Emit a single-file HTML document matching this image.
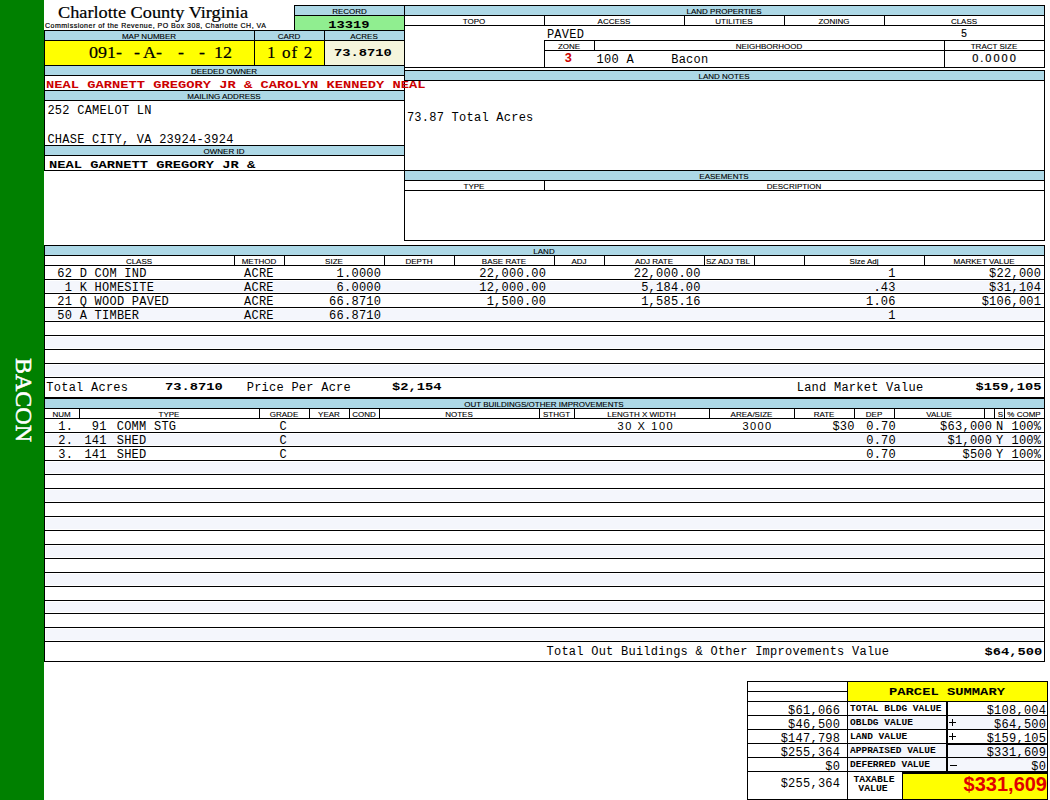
<!DOCTYPE html>
<html><head><meta charset="utf-8"><title>Charlotte County Virginia - Parcel</title>
<style>
html,body{margin:0;padding:0;background:#fff;}
body{width:1050px;height:800px;position:relative;overflow:hidden;}
body div{position:absolute;}
.t{white-space:pre;line-height:normal;}
</style></head><body>
<div style="left:0px;top:0px;width:44px;height:800px;background:#008000"></div>
<div style="left:294px;top:5px;width:110px;height:25px;background:#000"></div>
<div style="left:295px;top:6px;width:109px;height:9px;background:#add8e6"></div>
<div style="left:295px;top:16px;width:109px;height:14px;background:#90ee90"></div>
<div style="left:44px;top:30px;width:361px;height:141px;background:#000"></div>
<div style="left:45px;top:31px;width:209px;height:9px;background:#add8e6"></div>
<div style="left:255px;top:31px;width:69px;height:9px;background:#add8e6"></div>
<div style="left:325px;top:31px;width:79px;height:9px;background:#add8e6"></div>
<div style="left:45px;top:41px;width:209px;height:24px;background:#ffff00"></div>
<div style="left:255px;top:41px;width:69px;height:24px;background:#ffff00"></div>
<div style="left:325px;top:41px;width:79px;height:24px;background:#f5f5dc"></div>
<div style="left:45px;top:66px;width:359px;height:9px;background:#add8e6"></div>
<div style="left:45px;top:76px;width:359px;height:14px;background:#fff"></div>
<div style="left:45px;top:91px;width:359px;height:9px;background:#add8e6"></div>
<div style="left:45px;top:101px;width:359px;height:44px;background:#fff"></div>
<div style="left:45px;top:146px;width:359px;height:9px;background:#add8e6"></div>
<div style="left:45px;top:156px;width:359px;height:14px;background:#fff"></div>
<div style="left:404px;top:5px;width:641px;height:63px;background:#000"></div>
<div style="left:405px;top:6px;width:639px;height:9px;background:#add8e6"></div>
<div style="left:405px;top:16px;width:639px;height:9px;background:#fff"></div>
<div style="left:405px;top:26px;width:639px;height:41px;background:#fff"></div>
<div style="left:544px;top:15px;width:1px;height:11px;background:#000"></div>
<div style="left:684px;top:15px;width:1px;height:11px;background:#000"></div>
<div style="left:784px;top:15px;width:1px;height:11px;background:#000"></div>
<div style="left:884px;top:15px;width:1px;height:11px;background:#000"></div>
<div style="left:544px;top:40px;width:501px;height:1px;background:#000"></div>
<div style="left:544px;top:50px;width:501px;height:1px;background:#000"></div>
<div style="left:544px;top:40px;width:1px;height:28px;background:#000"></div>
<div style="left:594px;top:40px;width:1px;height:11px;background:#000"></div>
<div style="left:944px;top:40px;width:1px;height:28px;background:#000"></div>
<div style="left:404px;top:70px;width:641px;height:171px;background:#000"></div>
<div style="left:405px;top:71px;width:639px;height:9px;background:#add8e6"></div>
<div style="left:405px;top:81px;width:639px;height:89px;background:#fff"></div>
<div style="left:405px;top:171px;width:639px;height:9px;background:#add8e6"></div>
<div style="left:405px;top:181px;width:639px;height:9px;background:#fff"></div>
<div style="left:544px;top:180px;width:1px;height:11px;background:#000"></div>
<div style="left:405px;top:191px;width:639px;height:49px;background:#fff"></div>
<div style="left:44px;top:245px;width:1001px;height:154px;background:#000"></div>
<div style="left:45px;top:246px;width:999px;height:9px;background:#add8e6"></div>
<div style="left:45px;top:256px;width:999px;height:9px;background:#fff"></div>
<div style="left:234px;top:255px;width:1px;height:11px;background:#000"></div>
<div style="left:284px;top:255px;width:1px;height:11px;background:#000"></div>
<div style="left:384px;top:255px;width:1px;height:11px;background:#000"></div>
<div style="left:454px;top:255px;width:1px;height:11px;background:#000"></div>
<div style="left:554px;top:255px;width:1px;height:11px;background:#000"></div>
<div style="left:604px;top:255px;width:1px;height:11px;background:#000"></div>
<div style="left:704px;top:255px;width:1px;height:11px;background:#000"></div>
<div style="left:754px;top:255px;width:1px;height:11px;background:#000"></div>
<div style="left:804px;top:255px;width:1px;height:11px;background:#000"></div>
<div style="left:924px;top:255px;width:1px;height:11px;background:#000"></div>
<div style="left:45px;top:266px;width:999px;height:13px;background:#fff"></div>
<div style="left:45px;top:280px;width:999px;height:13px;background:#fff"></div>
<div style="left:46px;top:281px;width:997px;height:11px;background:#f4f6fc"></div>
<div style="left:45px;top:294px;width:999px;height:13px;background:#fff"></div>
<div style="left:45px;top:308px;width:999px;height:13px;background:#fff"></div>
<div style="left:46px;top:309px;width:997px;height:11px;background:#f4f6fc"></div>
<div style="left:45px;top:322px;width:999px;height:13px;background:#fff"></div>
<div style="left:45px;top:336px;width:999px;height:13px;background:#fff"></div>
<div style="left:46px;top:337px;width:997px;height:11px;background:#f4f6fc"></div>
<div style="left:45px;top:350px;width:999px;height:13px;background:#fff"></div>
<div style="left:45px;top:364px;width:999px;height:13px;background:#fff"></div>
<div style="left:46px;top:365px;width:997px;height:11px;background:#f4f6fc"></div>
<div style="left:45px;top:378px;width:999px;height:19px;background:#fff"></div>
<div style="left:44px;top:398px;width:1001px;height:1px;background:#000"></div>
<div style="left:44px;top:398px;width:1001px;height:264px;background:#000"></div>
<div style="left:45px;top:399px;width:999px;height:9px;background:#add8e6"></div>
<div style="left:45px;top:409px;width:999px;height:9px;background:#fff"></div>
<div style="left:79px;top:408px;width:1px;height:11px;background:#000"></div>
<div style="left:259px;top:408px;width:1px;height:11px;background:#000"></div>
<div style="left:309px;top:408px;width:1px;height:11px;background:#000"></div>
<div style="left:349px;top:408px;width:1px;height:11px;background:#000"></div>
<div style="left:379px;top:408px;width:1px;height:11px;background:#000"></div>
<div style="left:539px;top:408px;width:1px;height:11px;background:#000"></div>
<div style="left:574px;top:408px;width:1px;height:11px;background:#000"></div>
<div style="left:709px;top:408px;width:1px;height:11px;background:#000"></div>
<div style="left:794px;top:408px;width:1px;height:11px;background:#000"></div>
<div style="left:854px;top:408px;width:1px;height:11px;background:#000"></div>
<div style="left:894px;top:408px;width:1px;height:11px;background:#000"></div>
<div style="left:984px;top:408px;width:1px;height:11px;background:#000"></div>
<div style="left:994px;top:408px;width:1px;height:11px;background:#000"></div>
<div style="left:1004px;top:408px;width:1px;height:11px;background:#000"></div>
<div style="left:45px;top:419px;width:999px;height:13px;background:#fff"></div>
<div style="left:45px;top:433px;width:999px;height:13px;background:#fff"></div>
<div style="left:46px;top:434px;width:997px;height:11px;background:#f4f6fc"></div>
<div style="left:45px;top:447px;width:999px;height:13px;background:#fff"></div>
<div style="left:45px;top:461px;width:999px;height:13px;background:#fff"></div>
<div style="left:46px;top:462px;width:997px;height:11px;background:#f4f6fc"></div>
<div style="left:45px;top:475px;width:999px;height:13px;background:#fff"></div>
<div style="left:45px;top:489px;width:999px;height:13px;background:#fff"></div>
<div style="left:46px;top:490px;width:997px;height:11px;background:#f4f6fc"></div>
<div style="left:45px;top:503px;width:999px;height:13px;background:#fff"></div>
<div style="left:45px;top:517px;width:999px;height:13px;background:#fff"></div>
<div style="left:46px;top:518px;width:997px;height:11px;background:#f4f6fc"></div>
<div style="left:45px;top:531px;width:999px;height:13px;background:#fff"></div>
<div style="left:45px;top:545px;width:999px;height:13px;background:#fff"></div>
<div style="left:46px;top:546px;width:997px;height:11px;background:#f4f6fc"></div>
<div style="left:45px;top:559px;width:999px;height:13px;background:#fff"></div>
<div style="left:45px;top:573px;width:999px;height:13px;background:#fff"></div>
<div style="left:46px;top:574px;width:997px;height:11px;background:#f4f6fc"></div>
<div style="left:45px;top:587px;width:999px;height:13px;background:#fff"></div>
<div style="left:45px;top:601px;width:999px;height:12px;background:#fff"></div>
<div style="left:46px;top:602px;width:997px;height:10px;background:#f4f6fc"></div>
<div style="left:45px;top:614px;width:999px;height:13px;background:#fff"></div>
<div style="left:45px;top:628px;width:999px;height:13px;background:#fff"></div>
<div style="left:46px;top:629px;width:997px;height:11px;background:#f4f6fc"></div>
<div style="left:45px;top:642px;width:999px;height:19px;background:#fff"></div>
<div style="left:747px;top:681px;width:301px;height:119px;background:#000"></div>
<div style="left:748px;top:682px;width:99px;height:9px;background:#fff"></div>
<div style="left:748px;top:692px;width:99px;height:9px;background:#fff"></div>
<div style="left:748px;top:702px;width:99px;height:13px;background:#fff"></div>
<div style="left:748px;top:716px;width:99px;height:13px;background:#fff"></div>
<div style="left:748px;top:730px;width:99px;height:13px;background:#fff"></div>
<div style="left:748px;top:744px;width:99px;height:13px;background:#fff"></div>
<div style="left:748px;top:758px;width:99px;height:13px;background:#fff"></div>
<div style="left:748px;top:772px;width:99px;height:27px;background:#fff"></div>
<div style="left:848px;top:682px;width:199px;height:19px;background:#ffff00"></div>
<div style="left:848px;top:702px;width:99px;height:13px;background:#fff"></div>
<div style="left:948px;top:702px;width:99px;height:13px;background:#fff"></div>
<div style="left:848px;top:716px;width:99px;height:13px;background:#f4f6fc"></div>
<div style="left:948px;top:716px;width:99px;height:13px;background:#f4f6fc"></div>
<div style="left:848px;top:730px;width:99px;height:13px;background:#fff"></div>
<div style="left:948px;top:730px;width:99px;height:13px;background:#fff"></div>
<div style="left:848px;top:744px;width:99px;height:13px;background:#f4f6fc"></div>
<div style="left:948px;top:744px;width:99px;height:13px;background:#f4f6fc"></div>
<div style="left:848px;top:758px;width:99px;height:13px;background:#f4f6fc"></div>
<div style="left:948px;top:758px;width:99px;height:13px;background:#f4f6fc"></div>
<div style="left:948px;top:743px;width:99px;height:2px;background:#000"></div>
<div style="left:946px;top:701px;width:2px;height:71px;background:#000"></div>
<div style="left:848px;top:772px;width:54px;height:27px;background:#fff"></div>
<div style="left:902px;top:771px;width:146px;height:29px;background:#000"></div>
<div style="left:903px;top:774px;width:144px;height:25px;background:#ffff00"></div>
<div style="left:949px;top:722px;width:7px;height:1px;background:#000"></div>
<div style="left:952px;top:719px;width:1px;height:7px;background:#000"></div>
<div style="left:949px;top:736px;width:7px;height:1px;background:#000"></div>
<div style="left:952px;top:733px;width:1px;height:7px;background:#000"></div>
<div style="left:950px;top:765px;width:7px;height:1px;background:#000"></div>
<div style="left:23.5px;top:399.5px;width:0;height:0"><div style="position:absolute;left:-60px;top:-14px;width:120px;text-align:center;transform:rotate(90deg);font:24px 'Liberation Serif', serif;color:#fff;-webkit-text-stroke:0.5px #fff;line-height:28px;white-space:pre">BACON</div></div>
<div class="t" style="top:2.80px;font:normal 17px 'Liberation Serif', serif;color:#000;left:58.00px;transform:scaleX(1.075);transform-origin:left 0;-webkit-text-stroke:0.2px #000;">Charlotte County Virginia</div>
<div class="t" style="top:21.50px;font:normal 7px 'Liberation Sans', sans-serif;color:#000;letter-spacing:0.5px;left:45.00px;-webkit-text-stroke:0.2px #000;">Commissioner of the Revenue, PO Box 308, Charlotte CH, VA</div>
<div class="t" style="top:6.70px;font:normal 8px 'Liberation Sans', sans-serif;color:#000;left:-50.50px;width:800px;text-align:center;-webkit-text-stroke:0.12px #000;">RECORD</div>
<div class="t" style="top:17.80px;font:bold 11.75px 'Liberation Mono', monospace;color:#000;left:-51.00px;width:800px;text-align:center;transform:scaleX(1.17);transform-origin:center 0;">13319</div>
<div class="t" style="top:31.70px;font:normal 8px 'Liberation Sans', sans-serif;color:#000;left:-251.00px;width:800px;text-align:center;-webkit-text-stroke:0.12px #000;">MAP NUMBER</div>
<div class="t" style="top:31.70px;font:normal 8px 'Liberation Sans', sans-serif;color:#000;left:-111.00px;width:800px;text-align:center;-webkit-text-stroke:0.12px #000;">CARD</div>
<div class="t" style="top:31.70px;font:normal 8px 'Liberation Sans', sans-serif;color:#000;left:-36.00px;width:800px;text-align:center;-webkit-text-stroke:0.12px #000;">ACRES</div>
<div class="t" style="top:42.70px;font:normal 17px 'Liberation Serif', serif;color:#000;left:88.80px;transform:scaleX(1.06);transform-origin:left 0;-webkit-text-stroke:0.2px #000;">091-</div>
<div class="t" style="top:42.70px;font:normal 17px 'Liberation Serif', serif;color:#000;left:134.00px;transform:scaleX(1.06);transform-origin:left 0;-webkit-text-stroke:0.2px #000;">-</div>
<div class="t" style="top:42.70px;font:normal 17px 'Liberation Serif', serif;color:#000;left:143.20px;transform:scaleX(1.06);transform-origin:left 0;-webkit-text-stroke:0.2px #000;">A-</div>
<div class="t" style="top:42.70px;font:normal 17px 'Liberation Serif', serif;color:#000;left:177.50px;transform:scaleX(1.06);transform-origin:left 0;-webkit-text-stroke:0.2px #000;">-</div>
<div class="t" style="top:42.70px;font:normal 17px 'Liberation Serif', serif;color:#000;left:198.90px;transform:scaleX(1.06);transform-origin:left 0;-webkit-text-stroke:0.2px #000;">-</div>
<div class="t" style="top:42.70px;font:normal 17px 'Liberation Serif', serif;color:#000;left:214.10px;transform:scaleX(1.06);transform-origin:left 0;-webkit-text-stroke:0.2px #000;">12</div>
<div class="t" style="top:42.80px;font:normal 17px 'Liberation Serif', serif;color:#000;letter-spacing:1.1px;left:267.00px;-webkit-text-stroke:0.2px #000;">1 of 2</div>
<div class="t" style="top:45.80px;font:bold 11.75px 'Liberation Mono', monospace;color:#000;left:-37.00px;width:800px;text-align:center;transform:scaleX(1.17);transform-origin:center 0;">73.8710</div>
<div class="t" style="top:66.70px;font:normal 8px 'Liberation Sans', sans-serif;color:#000;left:-176.00px;width:800px;text-align:center;-webkit-text-stroke:0.12px #000;">DEEDED OWNER</div>
<div class="t" style="top:91.70px;font:normal 8px 'Liberation Sans', sans-serif;color:#000;left:-176.00px;width:800px;text-align:center;-webkit-text-stroke:0.12px #000;">MAILING ADDRESS</div>
<div class="t" style="top:103.70px;font:normal 12px 'Liberation Mono', monospace;color:#000;letter-spacing:0.25px;left:47.40px;">252 CAMELOT LN</div>
<div class="t" style="top:133.40px;font:normal 12px 'Liberation Mono', monospace;color:#000;letter-spacing:0.25px;left:47.40px;">CHASE CITY, VA 23924-3924</div>
<div class="t" style="top:146.70px;font:normal 8px 'Liberation Sans', sans-serif;color:#000;left:-176.00px;width:800px;text-align:center;-webkit-text-stroke:0.12px #000;">OWNER ID</div>
<div class="t" style="top:157.70px;font:bold 11.75px 'Liberation Mono', monospace;color:#000;left:49.00px;transform:scaleX(1.17);transform-origin:left 0;">NEAL GARNETT GREGORY JR &</div>
<div class="t" style="top:6.70px;font:normal 8px 'Liberation Sans', sans-serif;color:#000;left:324.00px;width:800px;text-align:center;-webkit-text-stroke:0.12px #000;">LAND PROPERTIES</div>
<div class="t" style="top:16.70px;font:normal 8px 'Liberation Sans', sans-serif;color:#000;left:74.00px;width:800px;text-align:center;-webkit-text-stroke:0.12px #000;">TOPO</div>
<div class="t" style="top:16.70px;font:normal 8px 'Liberation Sans', sans-serif;color:#000;left:214.00px;width:800px;text-align:center;-webkit-text-stroke:0.12px #000;">ACCESS</div>
<div class="t" style="top:16.70px;font:normal 8px 'Liberation Sans', sans-serif;color:#000;left:334.00px;width:800px;text-align:center;-webkit-text-stroke:0.12px #000;">UTILITIES</div>
<div class="t" style="top:16.70px;font:normal 8px 'Liberation Sans', sans-serif;color:#000;left:434.00px;width:800px;text-align:center;-webkit-text-stroke:0.12px #000;">ZONING</div>
<div class="t" style="top:16.70px;font:normal 8px 'Liberation Sans', sans-serif;color:#000;left:564.00px;width:800px;text-align:center;-webkit-text-stroke:0.12px #000;">CLASS</div>
<div class="t" style="top:41.70px;font:normal 8px 'Liberation Sans', sans-serif;color:#000;left:169.00px;width:800px;text-align:center;-webkit-text-stroke:0.12px #000;">ZONE</div>
<div class="t" style="top:41.70px;font:normal 8px 'Liberation Sans', sans-serif;color:#000;left:369.00px;width:800px;text-align:center;-webkit-text-stroke:0.12px #000;">NEIGHBORHOOD</div>
<div class="t" style="top:41.70px;font:normal 8px 'Liberation Sans', sans-serif;color:#000;left:594.00px;width:800px;text-align:center;-webkit-text-stroke:0.12px #000;">TRACT SIZE</div>
<div class="t" style="top:28.00px;font:normal 12px 'Liberation Mono', monospace;color:#000;letter-spacing:0.25px;left:546.90px;">PAVED</div>
<div class="t" style="top:27.60px;font:normal 10px 'Liberation Sans', sans-serif;color:#000;left:564.00px;width:800px;text-align:center;-webkit-text-stroke:0.2px #000;">5</div>
<div class="t" style="top:51.90px;font:bold 12.5px 'Liberation Mono', monospace;color:#cc0000;left:168.30px;width:800px;text-align:center;">3</div>
<div class="t" style="top:52.50px;font:normal 12px 'Liberation Mono', monospace;color:#000;letter-spacing:0.25px;left:596.60px;">100 A</div>
<div class="t" style="top:52.50px;font:normal 12px 'Liberation Mono', monospace;color:#000;letter-spacing:0.25px;left:671.20px;">Bacon</div>
<div class="t" style="top:51.60px;font:normal 11px 'Liberation Sans', sans-serif;color:#000;letter-spacing:2.0px;left:595.00px;width:800px;text-align:center;-webkit-text-stroke:0.2px #000;">0.0000</div>
<div class="t" style="top:71.70px;font:normal 8px 'Liberation Sans', sans-serif;color:#000;left:324.00px;width:800px;text-align:center;-webkit-text-stroke:0.12px #000;">LAND NOTES</div>
<div class="t" style="top:110.60px;font:normal 12px 'Liberation Mono', monospace;color:#000;letter-spacing:0.25px;left:406.90px;">73.87 Total Acres</div>
<div class="t" style="top:171.70px;font:normal 8px 'Liberation Sans', sans-serif;color:#000;left:324.00px;width:800px;text-align:center;-webkit-text-stroke:0.12px #000;">EASEMENTS</div>
<div class="t" style="top:181.70px;font:normal 8px 'Liberation Sans', sans-serif;color:#000;left:74.00px;width:800px;text-align:center;-webkit-text-stroke:0.12px #000;">TYPE</div>
<div class="t" style="top:181.70px;font:normal 8px 'Liberation Sans', sans-serif;color:#000;left:394.00px;width:800px;text-align:center;-webkit-text-stroke:0.12px #000;">DESCRIPTION</div>
<div class="t" style="top:77.60px;font:bold 11.75px 'Liberation Mono', monospace;color:#cc0000;left:46.00px;transform:scaleX(1.17);transform-origin:left 0;">NEAL GARNETT GREGORY JR &amp; CAROLYN KENNEDY NEAL</div>
<div class="t" style="top:246.90px;font:normal 8px 'Liberation Sans', sans-serif;color:#000;left:144.00px;width:800px;text-align:center;-webkit-text-stroke:0.12px #000;">LAND</div>
<div class="t" style="top:256.50px;font:normal 8px 'Liberation Sans', sans-serif;color:#000;left:-261.00px;width:800px;text-align:center;-webkit-text-stroke:0.12px #000;">CLASS</div>
<div class="t" style="top:256.50px;font:normal 8px 'Liberation Sans', sans-serif;color:#000;left:-141.00px;width:800px;text-align:center;-webkit-text-stroke:0.12px #000;">METHOD</div>
<div class="t" style="top:256.50px;font:normal 8px 'Liberation Sans', sans-serif;color:#000;left:-66.00px;width:800px;text-align:center;-webkit-text-stroke:0.12px #000;">SIZE</div>
<div class="t" style="top:256.50px;font:normal 8px 'Liberation Sans', sans-serif;color:#000;left:19.00px;width:800px;text-align:center;-webkit-text-stroke:0.12px #000;">DEPTH</div>
<div class="t" style="top:256.50px;font:normal 8px 'Liberation Sans', sans-serif;color:#000;left:104.00px;width:800px;text-align:center;-webkit-text-stroke:0.12px #000;">BASE RATE</div>
<div class="t" style="top:256.50px;font:normal 8px 'Liberation Sans', sans-serif;color:#000;left:179.00px;width:800px;text-align:center;-webkit-text-stroke:0.12px #000;">ADJ</div>
<div class="t" style="top:256.50px;font:normal 8px 'Liberation Sans', sans-serif;color:#000;left:254.00px;width:800px;text-align:center;-webkit-text-stroke:0.12px #000;">ADJ RATE</div>
<div class="t" style="top:256.50px;font:normal 8px 'Liberation Sans', sans-serif;color:#000;left:464.00px;width:800px;text-align:center;-webkit-text-stroke:0.12px #000;">Size Adj</div>
<div class="t" style="top:256.50px;font:normal 8px 'Liberation Sans', sans-serif;color:#000;left:584.00px;width:800px;text-align:center;-webkit-text-stroke:0.12px #000;">MARKET VALUE</div>
<div class="t" style="top:256.50px;font:normal 8px 'Liberation Sans', sans-serif;color:#000;left:706.00px;-webkit-text-stroke:0.12px #000;">SZ ADJ TBL</div>
<div class="t" style="top:267.20px;font:normal 12px 'Liberation Mono', monospace;color:#000;letter-spacing:0.25px;left:57.30px;">62 D COM IND</div>
<div class="t" style="top:267.20px;font:normal 12px 'Liberation Mono', monospace;color:#000;letter-spacing:0.25px;left:244.00px;">ACRE</div>
<div class="t" style="top:267.20px;font:normal 12px 'Liberation Mono', monospace;color:#000;letter-spacing:0.25px;right:668.75px;">1.0000</div>
<div class="t" style="top:267.20px;font:normal 12px 'Liberation Mono', monospace;color:#000;letter-spacing:0.25px;right:503.75px;">22,000.00</div>
<div class="t" style="top:267.20px;font:normal 12px 'Liberation Mono', monospace;color:#000;letter-spacing:0.25px;right:349.25px;">22,000.00</div>
<div class="t" style="top:267.20px;font:normal 12px 'Liberation Mono', monospace;color:#000;letter-spacing:0.25px;right:154.25px;">1</div>
<div class="t" style="top:267.20px;font:normal 12px 'Liberation Mono', monospace;color:#000;letter-spacing:0.25px;right:8.75px;">$22,000</div>
<div class="t" style="top:281.20px;font:normal 12px 'Liberation Mono', monospace;color:#000;letter-spacing:0.25px;left:57.30px;"> 1 K HOMESITE</div>
<div class="t" style="top:281.20px;font:normal 12px 'Liberation Mono', monospace;color:#000;letter-spacing:0.25px;left:244.00px;">ACRE</div>
<div class="t" style="top:281.20px;font:normal 12px 'Liberation Mono', monospace;color:#000;letter-spacing:0.25px;right:668.75px;">6.0000</div>
<div class="t" style="top:281.20px;font:normal 12px 'Liberation Mono', monospace;color:#000;letter-spacing:0.25px;right:503.75px;">12,000.00</div>
<div class="t" style="top:281.20px;font:normal 12px 'Liberation Mono', monospace;color:#000;letter-spacing:0.25px;right:349.25px;">5,184.00</div>
<div class="t" style="top:281.20px;font:normal 12px 'Liberation Mono', monospace;color:#000;letter-spacing:0.25px;right:154.25px;">.43</div>
<div class="t" style="top:281.20px;font:normal 12px 'Liberation Mono', monospace;color:#000;letter-spacing:0.25px;right:8.75px;">$31,104</div>
<div class="t" style="top:295.20px;font:normal 12px 'Liberation Mono', monospace;color:#000;letter-spacing:0.25px;left:57.30px;">21 Q WOOD PAVED</div>
<div class="t" style="top:295.20px;font:normal 12px 'Liberation Mono', monospace;color:#000;letter-spacing:0.25px;left:244.00px;">ACRE</div>
<div class="t" style="top:295.20px;font:normal 12px 'Liberation Mono', monospace;color:#000;letter-spacing:0.25px;right:668.75px;">66.8710</div>
<div class="t" style="top:295.20px;font:normal 12px 'Liberation Mono', monospace;color:#000;letter-spacing:0.25px;right:503.75px;">1,500.00</div>
<div class="t" style="top:295.20px;font:normal 12px 'Liberation Mono', monospace;color:#000;letter-spacing:0.25px;right:349.25px;">1,585.16</div>
<div class="t" style="top:295.20px;font:normal 12px 'Liberation Mono', monospace;color:#000;letter-spacing:0.25px;right:154.25px;">1.06</div>
<div class="t" style="top:295.20px;font:normal 12px 'Liberation Mono', monospace;color:#000;letter-spacing:0.25px;right:8.75px;">$106,001</div>
<div class="t" style="top:309.20px;font:normal 12px 'Liberation Mono', monospace;color:#000;letter-spacing:0.25px;left:57.30px;">50 A TIMBER</div>
<div class="t" style="top:309.20px;font:normal 12px 'Liberation Mono', monospace;color:#000;letter-spacing:0.25px;left:244.00px;">ACRE</div>
<div class="t" style="top:309.20px;font:normal 12px 'Liberation Mono', monospace;color:#000;letter-spacing:0.25px;right:668.75px;">66.8710</div>
<div class="t" style="top:309.20px;font:normal 12px 'Liberation Mono', monospace;color:#000;letter-spacing:0.25px;right:154.25px;">1</div>
<div class="t" style="top:380.50px;font:normal 12px 'Liberation Mono', monospace;color:#000;letter-spacing:0.25px;left:46.30px;">Total Acres</div>
<div class="t" style="top:379.70px;font:bold 11.75px 'Liberation Mono', monospace;color:#000;left:165.30px;transform:scaleX(1.17);transform-origin:left 0;">73.8710</div>
<div class="t" style="top:380.50px;font:normal 12px 'Liberation Mono', monospace;color:#000;letter-spacing:0.25px;left:246.70px;">Price Per Acre</div>
<div class="t" style="top:379.70px;font:bold 11.75px 'Liberation Mono', monospace;color:#000;left:392.40px;transform:scaleX(1.17);transform-origin:left 0;">$2,154</div>
<div class="t" style="top:380.50px;font:normal 12px 'Liberation Mono', monospace;color:#000;letter-spacing:0.25px;left:796.70px;">Land Market Value</div>
<div class="t" style="top:379.70px;font:bold 11.75px 'Liberation Mono', monospace;color:#000;right:9.00px;transform:scaleX(1.17);transform-origin:right 0;">$159,105</div>
<div class="t" style="top:399.70px;font:normal 8px 'Liberation Sans', sans-serif;color:#000;left:144.00px;width:800px;text-align:center;-webkit-text-stroke:0.12px #000;">OUT BUILDINGS/OTHER IMPROVEMENTS</div>
<div class="t" style="top:409.70px;font:normal 8px 'Liberation Sans', sans-serif;color:#000;left:-338.50px;width:800px;text-align:center;-webkit-text-stroke:0.12px #000;">NUM</div>
<div class="t" style="top:409.70px;font:normal 8px 'Liberation Sans', sans-serif;color:#000;left:-231.00px;width:800px;text-align:center;-webkit-text-stroke:0.12px #000;">TYPE</div>
<div class="t" style="top:409.70px;font:normal 8px 'Liberation Sans', sans-serif;color:#000;left:-116.00px;width:800px;text-align:center;-webkit-text-stroke:0.12px #000;">GRADE</div>
<div class="t" style="top:409.70px;font:normal 8px 'Liberation Sans', sans-serif;color:#000;left:-71.00px;width:800px;text-align:center;-webkit-text-stroke:0.12px #000;">YEAR</div>
<div class="t" style="top:409.70px;font:normal 8px 'Liberation Sans', sans-serif;color:#000;left:-36.00px;width:800px;text-align:center;-webkit-text-stroke:0.12px #000;">COND</div>
<div class="t" style="top:409.70px;font:normal 8px 'Liberation Sans', sans-serif;color:#000;left:59.00px;width:800px;text-align:center;-webkit-text-stroke:0.12px #000;">NOTES</div>
<div class="t" style="top:409.70px;font:normal 8px 'Liberation Sans', sans-serif;color:#000;left:156.50px;width:800px;text-align:center;-webkit-text-stroke:0.12px #000;">STHGT</div>
<div class="t" style="top:409.70px;font:normal 8px 'Liberation Sans', sans-serif;color:#000;left:241.50px;width:800px;text-align:center;-webkit-text-stroke:0.12px #000;">LENGTH X WIDTH</div>
<div class="t" style="top:409.70px;font:normal 8px 'Liberation Sans', sans-serif;color:#000;left:351.50px;width:800px;text-align:center;-webkit-text-stroke:0.12px #000;">AREA/SIZE</div>
<div class="t" style="top:409.70px;font:normal 8px 'Liberation Sans', sans-serif;color:#000;left:424.00px;width:800px;text-align:center;-webkit-text-stroke:0.12px #000;">RATE</div>
<div class="t" style="top:409.70px;font:normal 8px 'Liberation Sans', sans-serif;color:#000;left:474.00px;width:800px;text-align:center;-webkit-text-stroke:0.12px #000;">DEP</div>
<div class="t" style="top:409.70px;font:normal 8px 'Liberation Sans', sans-serif;color:#000;left:539.00px;width:800px;text-align:center;-webkit-text-stroke:0.12px #000;">VALUE</div>
<div class="t" style="top:409.70px;font:normal 8px 'Liberation Sans', sans-serif;color:#000;left:624.00px;width:800px;text-align:center;-webkit-text-stroke:0.12px #000;">% COMP</div>
<div class="t" style="top:409.70px;font:normal 8px 'Liberation Sans', sans-serif;color:#000;right:47.00px;-webkit-text-stroke:0.12px #000;">S</div>
<div class="t" style="top:420.20px;font:normal 12px 'Liberation Mono', monospace;color:#000;letter-spacing:0.25px;left:58.20px;">1.</div>
<div class="t" style="top:420.20px;font:normal 12px 'Liberation Mono', monospace;color:#000;letter-spacing:0.25px;right:943.25px;">91</div>
<div class="t" style="top:420.20px;font:normal 12px 'Liberation Mono', monospace;color:#000;letter-spacing:0.25px;left:116.70px;">COMM STG</div>
<div class="t" style="top:420.20px;font:normal 12px 'Liberation Mono', monospace;color:#000;letter-spacing:0.25px;left:-116.88px;width:800px;text-align:center;">C</div>
<div class="t" style="top:420.00px;font:normal 11px 'Liberation Sans', sans-serif;color:#000;letter-spacing:1.6px;left:617.50px;">30 X 100</div>
<div class="t" style="top:420.00px;font:normal 11px 'Liberation Sans', sans-serif;color:#000;letter-spacing:1.4px;left:742.50px;">3000</div>
<div class="t" style="top:420.20px;font:normal 12px 'Liberation Mono', monospace;color:#000;letter-spacing:0.25px;right:195.25px;">$30</div>
<div class="t" style="top:420.20px;font:normal 12px 'Liberation Mono', monospace;color:#000;letter-spacing:0.25px;left:866.20px;">0.70</div>
<div class="t" style="top:420.20px;font:normal 12px 'Liberation Mono', monospace;color:#000;letter-spacing:0.25px;right:57.75px;">$63,000</div>
<div class="t" style="top:420.20px;font:normal 12px 'Liberation Mono', monospace;color:#000;letter-spacing:0.25px;left:599.62px;width:800px;text-align:center;">N</div>
<div class="t" style="top:420.20px;font:normal 12px 'Liberation Mono', monospace;color:#000;letter-spacing:0.25px;right:8.75px;">100%</div>
<div class="t" style="top:434.20px;font:normal 12px 'Liberation Mono', monospace;color:#000;letter-spacing:0.25px;left:58.20px;">2.</div>
<div class="t" style="top:434.20px;font:normal 12px 'Liberation Mono', monospace;color:#000;letter-spacing:0.25px;right:943.25px;">141</div>
<div class="t" style="top:434.20px;font:normal 12px 'Liberation Mono', monospace;color:#000;letter-spacing:0.25px;left:116.70px;">SHED</div>
<div class="t" style="top:434.20px;font:normal 12px 'Liberation Mono', monospace;color:#000;letter-spacing:0.25px;left:-116.88px;width:800px;text-align:center;">C</div>
<div class="t" style="top:434.20px;font:normal 12px 'Liberation Mono', monospace;color:#000;letter-spacing:0.25px;left:866.20px;">0.70</div>
<div class="t" style="top:434.20px;font:normal 12px 'Liberation Mono', monospace;color:#000;letter-spacing:0.25px;right:57.75px;">$1,000</div>
<div class="t" style="top:434.20px;font:normal 12px 'Liberation Mono', monospace;color:#000;letter-spacing:0.25px;left:599.62px;width:800px;text-align:center;">Y</div>
<div class="t" style="top:434.20px;font:normal 12px 'Liberation Mono', monospace;color:#000;letter-spacing:0.25px;right:8.75px;">100%</div>
<div class="t" style="top:448.20px;font:normal 12px 'Liberation Mono', monospace;color:#000;letter-spacing:0.25px;left:58.20px;">3.</div>
<div class="t" style="top:448.20px;font:normal 12px 'Liberation Mono', monospace;color:#000;letter-spacing:0.25px;right:943.25px;">141</div>
<div class="t" style="top:448.20px;font:normal 12px 'Liberation Mono', monospace;color:#000;letter-spacing:0.25px;left:116.70px;">SHED</div>
<div class="t" style="top:448.20px;font:normal 12px 'Liberation Mono', monospace;color:#000;letter-spacing:0.25px;left:-116.88px;width:800px;text-align:center;">C</div>
<div class="t" style="top:448.20px;font:normal 12px 'Liberation Mono', monospace;color:#000;letter-spacing:0.25px;left:866.20px;">0.70</div>
<div class="t" style="top:448.20px;font:normal 12px 'Liberation Mono', monospace;color:#000;letter-spacing:0.25px;right:57.75px;">$500</div>
<div class="t" style="top:448.20px;font:normal 12px 'Liberation Mono', monospace;color:#000;letter-spacing:0.25px;left:599.62px;width:800px;text-align:center;">Y</div>
<div class="t" style="top:448.20px;font:normal 12px 'Liberation Mono', monospace;color:#000;letter-spacing:0.25px;right:8.75px;">100%</div>
<div class="t" style="top:645.40px;font:normal 12px 'Liberation Mono', monospace;color:#000;letter-spacing:0.25px;left:546.50px;">Total Out Buildings &amp; Other Improvements Value</div>
<div class="t" style="top:644.60px;font:bold 11.75px 'Liberation Mono', monospace;color:#000;right:8.00px;transform:scaleX(1.17);transform-origin:right 0;">$64,500</div>
<div class="t" style="top:703.60px;font:normal 12px 'Liberation Mono', monospace;color:#000;letter-spacing:0.25px;right:209.75px;">$61,066</div>
<div class="t" style="top:704.30px;font:bold 8.5px 'Liberation Mono', monospace;color:#000;left:849.50px;transform:scaleX(1.12);transform-origin:left 0;">TOTAL BLDG VALUE</div>
<div class="t" style="top:703.60px;font:normal 12px 'Liberation Mono', monospace;color:#000;letter-spacing:0.25px;right:3.75px;">$108,004</div>
<div class="t" style="top:717.60px;font:normal 12px 'Liberation Mono', monospace;color:#000;letter-spacing:0.25px;right:209.75px;">$46,500</div>
<div class="t" style="top:718.30px;font:bold 8.5px 'Liberation Mono', monospace;color:#000;left:849.50px;transform:scaleX(1.12);transform-origin:left 0;">OBLDG VALUE</div>
<div class="t" style="top:717.60px;font:normal 12px 'Liberation Mono', monospace;color:#000;letter-spacing:0.25px;right:3.75px;">$64,500</div>
<div class="t" style="top:731.60px;font:normal 12px 'Liberation Mono', monospace;color:#000;letter-spacing:0.25px;right:209.75px;">$147,798</div>
<div class="t" style="top:732.30px;font:bold 8.5px 'Liberation Mono', monospace;color:#000;left:849.50px;transform:scaleX(1.12);transform-origin:left 0;">LAND VALUE</div>
<div class="t" style="top:731.60px;font:normal 12px 'Liberation Mono', monospace;color:#000;letter-spacing:0.25px;right:3.75px;">$159,105</div>
<div class="t" style="top:745.60px;font:normal 12px 'Liberation Mono', monospace;color:#000;letter-spacing:0.25px;right:209.75px;">$255,364</div>
<div class="t" style="top:746.30px;font:bold 8.5px 'Liberation Mono', monospace;color:#000;left:849.50px;transform:scaleX(1.12);transform-origin:left 0;">APPRAISED VALUE</div>
<div class="t" style="top:745.60px;font:normal 12px 'Liberation Mono', monospace;color:#000;letter-spacing:0.25px;right:3.75px;">$331,609</div>
<div class="t" style="top:759.60px;font:normal 12px 'Liberation Mono', monospace;color:#000;letter-spacing:0.25px;right:209.75px;">$0</div>
<div class="t" style="top:760.30px;font:bold 8.5px 'Liberation Mono', monospace;color:#000;left:849.50px;transform:scaleX(1.12);transform-origin:left 0;">DEFERRED VALUE</div>
<div class="t" style="top:759.60px;font:normal 12px 'Liberation Mono', monospace;color:#000;letter-spacing:0.25px;right:3.75px;">$0</div>
<div class="t" style="top:776.80px;font:normal 12px 'Liberation Mono', monospace;color:#000;letter-spacing:0.25px;right:209.75px;">$255,364</div>
<div class="t" style="top:774.90px;font:bold 8.5px 'Liberation Mono', monospace;color:#000;left:473.50px;width:800px;text-align:center;transform:scaleX(1.15);transform-origin:center 0;">TAXABLE</div>
<div class="t" style="top:784.40px;font:bold 8.5px 'Liberation Mono', monospace;color:#000;left:473.00px;width:800px;text-align:center;transform:scaleX(1.15);transform-origin:center 0;">VALUE</div>
<div class="t" style="top:684.90px;font:bold 11.5px 'Liberation Mono', monospace;color:#000;left:547.00px;width:800px;text-align:center;transform:scaleX(1.2);transform-origin:center 0;">PARCEL SUMMARY</div>
<div class="t" style="top:772.90px;font:bold 20px 'Liberation Sans', sans-serif;color:#e00000;right:3.00px;">$331,609</div>
</body></html>
